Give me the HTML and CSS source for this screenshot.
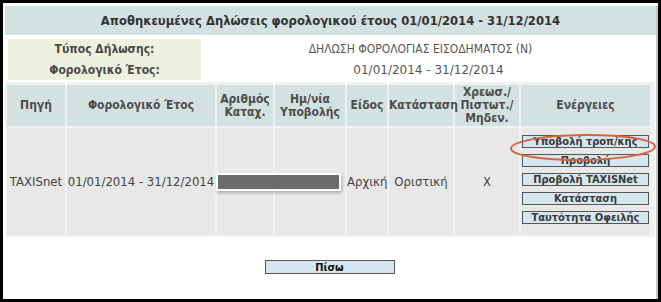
FILE: index.html
```html
<!DOCTYPE html>
<html lang="el">
<head>
  <meta charset="UTF-8" />
  <title>Αποθηκευμένες Δηλώσεις</title>
  <link rel="stylesheet" href="styles.css">
</head>
<body>
  <div class="frame">
    <div class="page">

      <!-- Title -->
      <div class="title">Αποθηκευμένες Δηλώσεις φορολογικού έτους 01/01/2014 - 31/12/2014</div>

      <!-- Declaration info -->
      <div class="info">
        <div class="info-label">Τύπος Δήλωσης:</div>
        <div class="info-value"><span class="decl-type">ΔΗΛΩΣΗ ΦΟΡΟΛΟΓΙΑΣ ΕΙΣΟΔΗΜΑΤΟΣ (Ν)</span></div>
        <div class="info-label">Φορολογικό Έτος:</div>
        <div class="info-value">01/01/2014 - 31/12/2014</div>
      </div>

      <!-- Results table -->
      <div class="results">
        <table class="grid">
          <colgroup>
            <col class="c-src"><col class="c-year"><col class="c-num"><col class="c-date">
            <col class="c-kind"><col class="c-state"><col class="c-debit"><col class="c-act">
          </colgroup>
          <thead>
            <tr>
              <th>Πηγή</th>
              <th>Φορολογικό Έτος</th>
              <th>Αριθμός<br>Καταχ.</th>
              <th>Ημ/νία<br>Υποβολής</th>
              <th>Είδος</th>
              <th>Κατάσταση</th>
              <th>Χρεωσ./<br>Πιστωτ./<br>Μηδεν.</th>
              <th>Ενέργειες</th>
            </tr>
          </thead>
          <tbody>
            <tr>
              <td>TAXISnet</td>
              <td>01/01/2014 - 31/12/2014</td>
              <td class="num-cell"><span class="redact"></span></td>
              <td></td>
              <td>Αρχική</td>
              <td>Οριστική</td>
              <td>X</td>
              <td class="actions">
                <button class="btn">Υποβολή τροπ/κής</button>
                <button class="btn">Προβολή</button>
                <button class="btn">Προβολή TAXISNet</button>
                <button class="btn">Κατάσταση</button>
                <button class="btn">Ταυτότητα Οφειλής</button>
              </td>
            </tr>
          </tbody>
        </table>
      </div>

      <div class="back">
        <button class="btn btn-back">Πίσω</button>
      </div>

      <!-- annotation ring -->
      <svg class="mark" width="152" height="34" viewBox="0 0 152 34">
        <ellipse cx="76" cy="15.5" rx="72" ry="12.5" fill="none" stroke="#d8623c" stroke-width="2" transform="rotate(-0.8 76 15.5)" />
      </svg>

    </div>
  </div>
</body>
</html>
```

FILE: styles.css
```css
/* — Base — */
* { box-sizing: border-box; margin: 0; padding: 0; }
body {
  font-family: "DejaVu Sans", Verdana, sans-serif;
  font-size: 12px;
  color: #444;
  background: #fff;
}

/* — Window frame — */
.frame {
  width: 661px; height: 302px;
  border: 3px solid #000;
  overflow: hidden;
}
.page {
  position: relative;
  height: 100%;
  border-right: 2px solid #c8c8c8;
}

/* — Title — */
.title {
  margin: 3px 0 0 2px;
  height: 29px;
  background: #d3e1e1;
  color: #333;
  font-family: "DejaVu Sans Condensed", "DejaVu Sans", sans-serif;
  font-weight: bold;
  font-size: 12.9px;
  display: flex; align-items: center; justify-content: center;
}

/* — Info — */
.info {
  margin: 4px 0 0 5px;
  display: grid;
  grid-template-columns: 193px 1fr;
  grid-template-rows: 20px 21px;
}
.info-label {
  background: #eef1dd;
  font-family: "DejaVu Sans Condensed", "DejaVu Sans", sans-serif;
  font-weight: bold;
  color: #4a4a4a;
  display: flex; align-items: center; justify-content: center;
}
.info-value {
  color: #555;
  display: flex; align-items: center; justify-content: center;
}
.decl-type {
  font-family: "DejaVu Sans Condensed", "DejaVu Sans", sans-serif;
  margin-right: 16px;
}

/* — Results — */
.results {
  margin: 2px 0 0 2px;
  width: 650px;
  padding: 1px 0 0 0;
  background: #eff2f2;
}
.grid {
  table-layout: fixed;
  border-spacing: 2px;
  width: 647px;
}
.c-src { width: 58px; }
.c-year { width: 148px; }
.c-num { width: 56px; }
.c-date { width: 70px; }
.c-kind { width: 40px; }
.c-state { width: 64px; }
.c-debit { width: 64px; }
.c-act { width: 129px; }

.grid th {
  height: 41px;
  background: #d3e1e1;
  color: #4d4d4d;
  font-family: "DejaVu Sans Condensed", "DejaVu Sans", sans-serif;
  font-weight: bold;
  line-height: 13px;
  text-align: center;
  vertical-align: middle;
}
.grid td {
  height: 107px;
  background: #e8e8e8;
  color: #444;
  font-size: 11.7px;
  text-align: center;
  vertical-align: middle;
  white-space: nowrap;
}
.num-cell { position: relative; }
.redact {
  position: absolute;
  left: -1px; top: 45px;
  width: 125px; height: 18px;
  background: #6b6b6b;
  border: 2px solid #fff;
  box-shadow: 1px 2px 3px rgba(0,0,0,0.25);
}
.grid td.actions {
  vertical-align: top;
  padding-top: 7px;
}

/* — Buttons — */
.btn {
  display: block;
  width: 127px; height: 13px;
  margin: 0 auto 6px;
  border: 1px solid #555;
  background: #d6e6ee;
  color: #3a3a3a;
  font-family: "DejaVu Sans Condensed", "DejaVu Sans", sans-serif;
  font-size: 11px;
  font-weight: bold;
  line-height: 11px;
  text-align: center;
}
.back { margin-top: 23px; }
.btn-back {
  width: 130px; height: 14px;
  color: #111;
}

/* — Annotation — */
.mark {
  position: absolute;
  left: 504px; top: 126px;
  pointer-events: none;
}
```
